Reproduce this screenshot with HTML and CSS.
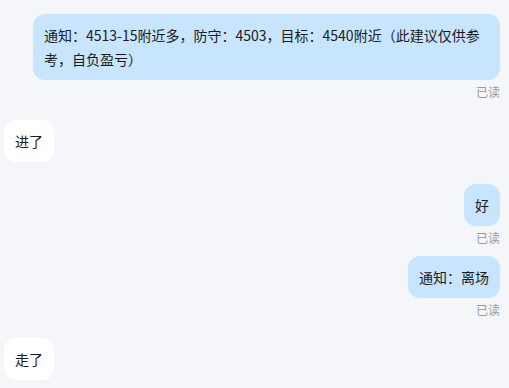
FILE: index.html
```html
<!DOCTYPE html>
<html lang="zh-CN">

<head>
    <meta charset="UTF-8">
    <meta name="viewport" content="width=device-width, initial-scale=1.0">
    <title>聊天记录</title>
    <link rel="stylesheet" href="styles.css">
</head>

<body>
    <div id="chat">
        <div class="msg msg-self">
            <div class="bubble">通知：4513-15附近多，防守：4503，目标：4540附近（此建议仅供参考，自负盈亏）</div>
            <span class="read">已读</span>
        </div>
        <div class="msg msg-other">
            <div class="bubble">进了</div>
        </div>
        <div class="msg msg-self">
            <div class="bubble">好</div>
            <span class="read">已读</span>
        </div>
        <div class="msg msg-self msg-close">
            <div class="bubble">通知：离场</div>
            <span class="read">已读</span>
        </div>
        <div class="msg msg-other">
            <div class="bubble">走了</div>
        </div>
    </div>
</body>

</html>
```

FILE: styles.css
```css
body {
    margin: 0;
    background: #f5f6fa;
    font-family: "Noto Sans CJK SC", "Noto Sans", sans-serif;
    color: #1a1a1a;
}

#chat {
    display: flex;
    flex-direction: column;
    padding: 14px 9px 0 4px;
}

.msg {
    display: flex;
    flex-direction: column;
    margin-bottom: 20px;
}

.msg:nth-child(2) {
    margin-bottom: 22px;
}

.msg-close {
    margin-top: -10px;
}

.msg-self {
    align-items: flex-end;
}

.msg-other {
    align-items: flex-start;
}

.bubble {
    max-width: 445px;
    padding: 9px 11px;
    font-size: 14px;
    line-height: 24px;
    border-radius: 12px;
    background: #ffffff;
}

.msg-self .bubble {
    background: #c8e5ff;
}

.read {
    margin-top: 4px;
    font-size: 12px;
    line-height: 16px;
    color: #9a9a9a;
}
```
